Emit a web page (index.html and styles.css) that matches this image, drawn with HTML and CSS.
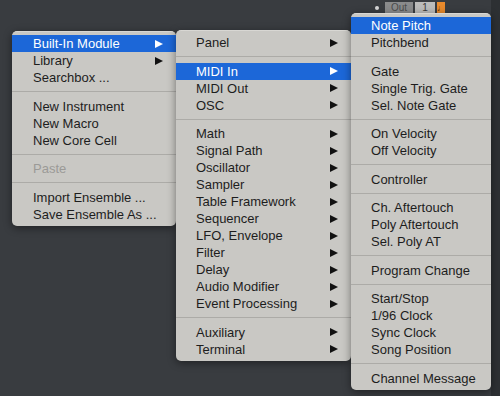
FILE: index.html
```html
<!DOCTYPE html>
<html lang="en">
<head>
    <meta charset="UTF-8">
    <meta name="viewport" content="width=device-width, initial-scale=1.0">
    <title>Built-In Module Menu</title>
    <link rel="stylesheet" href="styles.css">
</head>
<body>
    <div class="desk">
        <div class="toolbar">
            <span class="dot"></span>
            <span class="box box-out">Out</span>
            <span class="box box-num">1</span>
            <span class="box box-note">&#9833;</span>
        </div>

        <div class="menu menu-main">
            <div class="item active">Built-In Module <span class="arrow"></span></div>
            <div class="item">Library <span class="arrow"></span></div>
            <div class="item">Searchbox ...</div>
            <div class="sep"></div>
            <div class="item">New Instrument</div>
            <div class="item">New Macro</div>
            <div class="item">New Core Cell</div>
            <div class="sep"></div>
            <div class="item disabled">Paste</div>
            <div class="sep"></div>
            <div class="item">Import Ensemble ...</div>
            <div class="item">Save Ensemble As ...</div>
        </div>

        <div class="menu menu-module">
            <div class="item">Panel <span class="arrow"></span></div>
            <div class="sep"></div>
            <div class="item active">MIDI In <span class="arrow"></span></div>
            <div class="item">MIDI Out <span class="arrow"></span></div>
            <div class="item">OSC <span class="arrow"></span></div>
            <div class="sep"></div>
            <div class="item">Math <span class="arrow"></span></div>
            <div class="item">Signal Path <span class="arrow"></span></div>
            <div class="item">Oscillator <span class="arrow"></span></div>
            <div class="item">Sampler <span class="arrow"></span></div>
            <div class="item">Table Framework <span class="arrow"></span></div>
            <div class="item">Sequencer <span class="arrow"></span></div>
            <div class="item">LFO, Envelope <span class="arrow"></span></div>
            <div class="item">Filter <span class="arrow"></span></div>
            <div class="item">Delay <span class="arrow"></span></div>
            <div class="item">Audio Modifier <span class="arrow"></span></div>
            <div class="item">Event Processing <span class="arrow"></span></div>
            <div class="sep"></div>
            <div class="item">Auxiliary <span class="arrow"></span></div>
            <div class="item">Terminal <span class="arrow"></span></div>
        </div>

        <div class="menu menu-midi">
            <div class="item active">Note Pitch</div>
            <div class="item">Pitchbend</div>
            <div class="sep"></div>
            <div class="item">Gate</div>
            <div class="item">Single Trig. Gate</div>
            <div class="item">Sel. Note Gate</div>
            <div class="sep"></div>
            <div class="item">On Velocity</div>
            <div class="item">Off Velocity</div>
            <div class="sep"></div>
            <div class="item">Controller</div>
            <div class="sep"></div>
            <div class="item">Ch. Aftertouch</div>
            <div class="item">Poly Aftertouch</div>
            <div class="item">Sel. Poly AT</div>
            <div class="sep"></div>
            <div class="item">Program Change</div>
            <div class="sep"></div>
            <div class="item">Start/Stop</div>
            <div class="item">1/96 Clock</div>
            <div class="item">Sync Clock</div>
            <div class="item">Song Position</div>
            <div class="sep"></div>
            <div class="item">Channel Message</div>
        </div>
    </div>
</body>
</html>
```

FILE: styles.css
```css
body {
    margin: 0;
    background-color: #383b3f;
    font-family: 'Liberation Sans', Arial, sans-serif;
    font-size: 13px;
    color: #1d1d1d;
}
.desk {
    position: relative;
    width: 500px;
    height: 396px;
    overflow: hidden;
    background: linear-gradient(to right, #393c40 0, #393c40 491px, #2d3033 491px);
}
.toolbar {
    display: flex;
    align-items: center;
    gap: 2px;
    padding: 2px 0 0 375px;
    height: 12px;
}
.dot {
    width: 4px;
    height: 4px;
    border-radius: 50%;
    background-color: #d8d8d8;
    margin-right: 4px;
}
.box {
    height: 12px;
    line-height: 12px;
    font-size: 10px;
    text-align: center;
}
.box-out {
    width: 28px;
    background-color: #8a8b8c;
    color: #4a4b4c;
}
.box-num {
    width: 20px;
    background-color: #bcbcbb;
    color: #3a3a3a;
}
.box-note {
    width: 8px;
    background-color: #e98a2c;
    color: #5a2f08;
    font-size: 9px;
}

/* popup menus */
.menu {
    position: absolute;
    background-color: #c9c8c4;
    border-radius: 5px;
    padding: 3px 0;
    box-shadow: 0 2px 8px rgba(0, 0, 0, 0.45);
    border-top: 1px solid #d8d7d3;
    box-sizing: border-box;
}
.menu-main {
    left: 12px;
    top: 31px;
    width: 164px;
}
.menu-module {
    left: 176px;
    top: 30px;
    width: 175px;
}
.menu-midi {
    left: 351px;
    top: 13px;
    width: 140px;
}
.item {
    height: 17px;
    line-height: 17px;
    display: flex;
    justify-content: space-between;
    align-items: center;
    padding: 0 13px 0 20px;
    white-space: nowrap;
}
.menu-main .item {
    padding-left: 21px;
}
.item.active {
    background-color: #1c67d8;
    color: #fff;
}
.item.disabled {
    color: #9b9a97;
}
.arrow {
    width: 0;
    height: 0;
    border-left: 8px solid #111;
    border-top: 4.5px solid transparent;
    border-bottom: 4.5px solid transparent;
}
.item.active .arrow {
    border-left-color: #fff;
}
.sep {
    border-top: 1px solid #acaba7;
    margin: 5px 0 5.5px;
}
```
